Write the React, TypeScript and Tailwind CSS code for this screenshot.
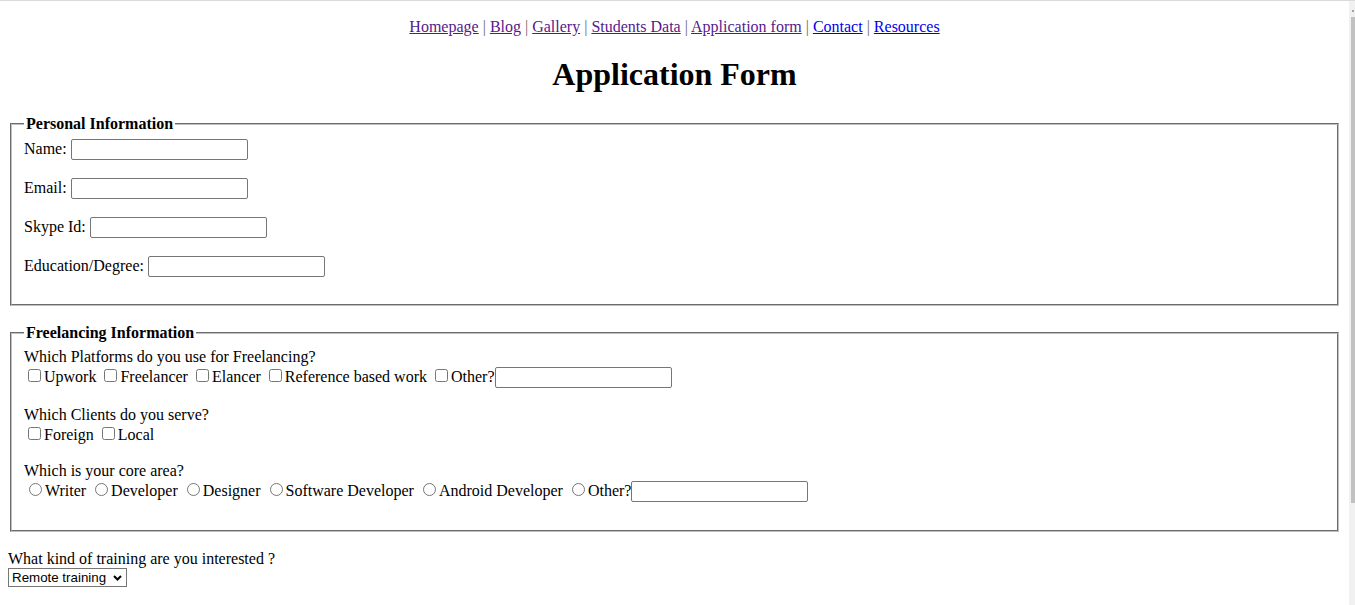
import React from "react";

const navLinks = [
  { label: "Homepage", visited: true },
  { label: "Blog", visited: true },
  { label: "Gallery", visited: true },
  { label: "Students Data", visited: true },
  { label: "Application form", visited: true },
  { label: "Contact", visited: false },
  { label: "Resources", visited: false },
];

const platforms = ["Upwork", "Freelancer", "Elancer", "Reference based work"];
const clients = ["Foreign", "Local"];
const areas = ["Writer", "Developer", "Designer", "Software Developer", "Android Developer"];

function TextInput() {
  return (
    <input
      type="text"
      className="w-[177px] border border-[#767676] rounded-[2px] px-[3px] py-[2px] bg-white text-black text-[13.333px] leading-[normal] font-['Liberation_Sans',Arial,sans-serif] align-baseline"
    />
  );
}

function Checkbox({ label, name }: { label: string; name: string }) {
  return (
    <>
      <input type="checkbox" name={name} className="m-[3px_3px_3px_4px] align-baseline" />
      {label}
    </>
  );
}

function Radio({ label, name }: { label: string; name: string }) {
  return (
    <>
      <input type="radio" name={name} className="m-[3px_3px_0px_5px] align-baseline" />
      {label}
    </>
  );
}

function Fieldset({ legend, children, className = "" }: { legend: string; children: React.ReactNode; className?: string }) {
  return (
    <fieldset
      className={`mx-[2px] border-2 [border-style:groove] border-[#c0c0c0] px-3 pt-[5.6px] pb-[10px] ${className}`}
    >
      <legend className="px-[2px] font-bold">{legend}</legend>
      {children}
    </fieldset>
  );
}

export default function App() {
  return (
    <div className="h-[605px] overflow-hidden flex border-t border-[#dadada] bg-white">
      <div className="flex-1 min-w-0 px-2 font-['Liberation_Serif','Times_New_Roman',serif] text-[16px] leading-[normal] text-black">
        <nav className="mt-[17px] text-center">
          {navLinks.map((link, i) => (
            <React.Fragment key={link.label}>
              {i > 0 && <span className="text-[#6b6b6b]"> | </span>}
              <a href="#" className={link.visited ? "text-[#551a8b] underline" : "text-[#0000ee] underline"}>
                {link.label}
              </a>
            </React.Fragment>
          ))}
        </nav>

        <h1 className="mt-[20.44px] mb-[21.44px] text-center text-[32px] font-bold">Application Form</h1>

        <form>
          <Fieldset legend="Personal Information">
            <div className="mt-px mb-[18px]">
              Name: <TextInput />
            </div>
            <div className="mb-[18px]">
              Email: <TextInput />
            </div>
            <div className="mb-[18px]">
              Skype Id: <TextInput />
            </div>
            <div className="mb-[16.6px]">
              Education/Degree: <TextInput />
            </div>
          </Fieldset>

          <Fieldset legend="Freelancing Information" className="mt-[18px]">
            <div>Which Platforms do you use for Freelancing?</div>
            <div className="mb-[18.4px]">
              {platforms.map((p) => (
                <React.Fragment key={p}>
                  <Checkbox label={p} name="platform" />{" "}
                </React.Fragment>
              ))}
              <Checkbox label="Other?" name="platform" />
              <TextInput />
            </div>

            <div>Which Clients do you serve?</div>
            <div className="mb-[18.4px]">
              {clients.map((c, i) => (
                <React.Fragment key={c}>
                  {i > 0 && " "}
                  <Checkbox label={c} name="client" />
                </React.Fragment>
              ))}
            </div>

            <div>Which is your core area?</div>
            <div className="mb-[17.4px]">
              {areas.map((a) => (
                <React.Fragment key={a}>
                  <Radio label={a} name="area" />{" "}
                </React.Fragment>
              ))}
              <Radio label="Other?" name="area" />
              <TextInput />
            </div>
          </Fieldset>

          <div className="mt-[18.4px]">
            <div>What kind of training are you interested ?</div>
            <div className="relative inline-block align-baseline">
              <select className="appearance-none w-[119px] h-[19px] border border-[#767676] bg-white pl-[3px] pr-4 text-black text-[13.333px] leading-[normal] font-['Liberation_Sans',Arial,sans-serif]">
                <option>Remote training</option>
                <option>Onsite training</option>
              </select>
              <svg
                className="pointer-events-none absolute right-[5px] top-[7px]"
                width="9"
                height="6"
                viewBox="0 0 9 6"
              >
                <path d="M1 1l3.5 3.5L8 1" stroke="#000" strokeWidth="2" fill="none" />
              </svg>
            </div>
          </div>
        </form>
      </div>

      <div className="w-[6px] shrink-0 bg-[#f1f1f1] flex flex-col items-end">
        <div className="mt-[9px] mr-[1px] w-[2px] h-[2px] bg-[#a3a3a3]" />
        <div className="mt-[5px] w-[4px] h-[486px] bg-[#c1c1c1]" />
      </div>
    </div>
  );
}
